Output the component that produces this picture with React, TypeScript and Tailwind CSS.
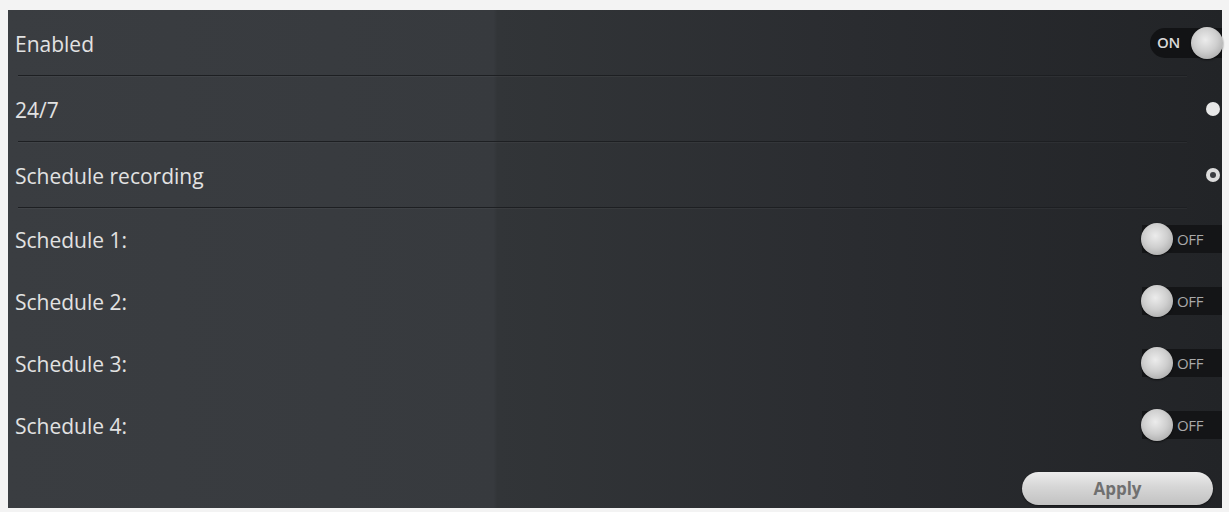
import React from 'react';

const font = { fontFamily: '"Open Sans", "Noto Sans", sans-serif' };

const Knob = () => (
  <div className="h-[32px] w-[32px] shrink-0 rounded-full bg-[radial-gradient(circle_at_45%_40%,#ececec_0%,#cfcfcf_45%,#a9a9a9_85%,#8c8c8c_100%)] shadow-[0_1px_2px_rgba(0,0,0,0.6)]" />
);

const OnToggle = () => (
  <div className="flex h-[30px] w-[72px] items-center rounded-l-full bg-[#121315] pl-[7px]">
    <span className="text-[15px] font-semibold tracking-tight text-[#d9d9d9]">ON</span>
    <div className="ml-auto -mr-[1px]">
      <Knob />
    </div>
  </div>
);

const OffToggle = () => (
  <div className="flex h-[28px] w-[80px] items-center bg-[#141517]">
    <div className="-ml-[1px]">
      <Knob />
    </div>
    <span className="ml-[4px] text-[15px] font-medium tracking-tight text-[#a9a9a9]">OFF</span>
  </div>
);

const Divider = () => (
  <div className="ml-[10px] mr-[35px] h-[1px] bg-[#1d1f22] shadow-[0_1px_0_rgba(255,255,255,0.04)]" />
);

const Row = ({ label, tall, children }: { label: string; tall?: boolean; children?: React.ReactNode }) => (
  <div className={`flex items-center justify-between pl-[7px] ${tall ? 'h-[65px]' : 'h-[62px]'}`}>
    <span className="mt-[4px] text-[21px] font-medium text-[#e2e2e2]">{label}</span>
    {children}
  </div>
);

const schedules = ['Schedule 1:', 'Schedule 2:', 'Schedule 3:', 'Schedule 4:'];

export default function App() {
  return (
    <div className="h-[512px] w-full bg-[#f3f3f3] pl-[8px] pt-[10px]" style={font}>
      <div className="flex h-[498px] w-[1214px] flex-col bg-[linear-gradient(90deg,#3a3d41_0%,#373a3e_40%,#323538_40.3%,#2a2c30_70%,#222427_100%)]">
        <Row label="Enabled" tall>
          <OnToggle />
        </Row>
        <Divider />
        <Row label="24/7" tall>
          <div className="mr-[2px] h-[14px] w-[14px] rounded-full bg-[#e8e8e8]" />
        </Row>
        <Divider />
        <Row label="Schedule recording" tall>
          <div className="mr-[2px] flex h-[14px] w-[14px] items-center justify-center rounded-full bg-[#dcdcdc]">
            <div className="h-[6px] w-[6px] rounded-full bg-[#3a3c40]" />
          </div>
        </Row>
        <Divider />
        {schedules.map((s) => (
          <Row key={s} label={s}>
            <OffToggle />
          </Row>
        ))}
        <div className="mt-[16px] flex justify-end pr-[9px]">
          <button className="h-[33px] w-[191px] rounded-full bg-[linear-gradient(to_bottom,#ececec_0%,#d6d6d6_45%,#c2c2c2_100%)] text-[17px] font-bold text-[#707070] shadow-[0_1px_2px_rgba(0,0,0,0.5)]">
            Apply
          </button>
        </div>
      </div>
    </div>
  );
}
